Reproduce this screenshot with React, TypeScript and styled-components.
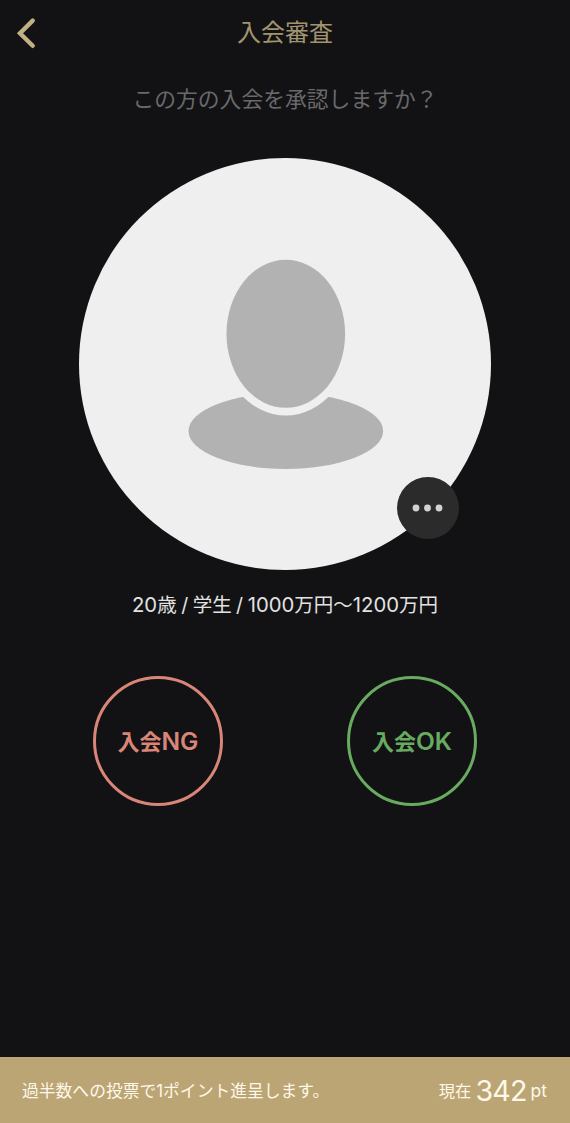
import React from "react";
import styled, { createGlobalStyle } from "styled-components";

const GlobalStyle = createGlobalStyle`
  * { box-sizing: border-box; }
  body { margin: 0; background: #121214; }
`;

const Screen = styled.main`
  width: 570px;
  height: 1123px;
  display: flex;
  flex-direction: column;
  overflow: hidden;
  background: #121214;
  font-family: Inter, "Noto Sans CJK JP", sans-serif;
  white-space: nowrap;
`;

const Header = styled.header`
  display: grid;
  grid-template-columns: 52px 1fr 52px;
  align-items: center;
  height: 66px;
`;

const BackButton = styled.button`
  display: flex;
  padding: 0 0 0 16px;
  border: 0;
  background: none;
`;

const Title = styled.h1`
  margin: 0;
  color: #a1956f;
  font-size: 24px;
  font-weight: 400;
  line-height: 36px;
  text-align: center;
`;

const Question = styled.p`
  margin: 17px 0 0;
  color: #69696b;
  font-size: 21.8px;
  font-weight: 400;
  line-height: 32px;
  text-align: center;
`;

const Avatar = styled.div`
  position: relative;
  flex: none;
  width: 412px;
  height: 412px;
  margin: 42.5px auto 0;
  border-radius: 50%;
  background: #efefef;
`;

const MoreButton = styled.button`
  position: absolute;
  left: 318px;
  top: 319px;
  display: flex;
  align-items: center;
  justify-content: center;
  width: 62px;
  height: 62px;
  padding: 1px 0 0;
  border: 0;
  border-radius: 50%;
  background: #2b2b2b;
`;

const Profile = styled.p`
  margin: 20.5px 0 0;
  color: #e2e2e2;
  font-size: 19.5px;
  font-weight: 400;
  line-height: 31px;
  word-spacing: -1px;
  text-align: center;
`;

const Latin = styled.span<{ $size: number }>`
  font-size: ${(p) => p.$size}px;
  line-height: 1;
`;

const Votes = styled.div`
  display: flex;
  justify-content: center;
  gap: 124px;
  margin-top: 55px;
`;

const VoteButton = styled.button<{ $color: string }>`
  width: 130px;
  height: 130px;
  padding: 2px 0 0;
  border: 3px solid ${(p) => p.$color};
  border-radius: 50%;
  background: none;
  color: ${(p) => p.$color};
  font: 600 22px/34px Inter, "Noto Sans CJK JP", sans-serif;
`;

const Footer = styled.footer`
  display: flex;
  align-items: center;
  justify-content: space-between;
  height: 66px;
  margin-top: auto;
  padding: 2px 23px 0 22px;
  background: #bba574;
  color: #fff8ea;
`;

const Notice = styled.span`
  font-size: 16.8px;
  line-height: 26px;
`;

const Points = styled.span`
  display: flex;
  align-items: center;
  font-size: 16.3px;
  line-height: 36px;
`;

const PointValue = styled.span`
  margin: 0 4px;
  font-size: 28.6px;
  letter-spacing: -0.8px;
`;

export default function App() {
  return (
    <Screen>
      <GlobalStyle />
      <Header>
        <BackButton aria-label="戻る">
          <svg width="20" height="32" viewBox="0 0 20 32" fill="none">
            <path d="M16.7 3.6 4 16.2 16.7 28.8" stroke="#c1b083" strokeWidth="4.4" strokeLinecap="round" />
          </svg>
        </BackButton>
        <Title>入会審査</Title>
      </Header>
      <Question>この方の入会を承認しますか？</Question>
      <Avatar>
        <svg width="412" height="412" viewBox="0 0 412 412">
          <ellipse cx="206.8" cy="273" rx="97.3" ry="38" fill="#b2b2b2" />
          <ellipse cx="206.8" cy="176" rx="67" ry="81.5" fill="#efefef" />
          <ellipse cx="206.8" cy="175.8" rx="59.3" ry="74" fill="#b2b2b2" />
        </svg>
        <MoreButton aria-label="その他">
          <svg width="32" height="8" viewBox="0 0 32 8" fill="#d2d2d2">
            <circle cx="4" cy="4" r="3.4" />
            <circle cx="15.5" cy="4" r="3.4" />
            <circle cx="27" cy="4" r="3.4" />
          </svg>
        </MoreButton>
      </Avatar>
      <Profile>
        <Latin $size={20.3}>20</Latin>歳 / 学生 / <Latin $size={20.3}>1000</Latin>万円〜
        <Latin $size={20.3}>1200</Latin>万円
      </Profile>
      <Votes>
        <VoteButton $color="#d98578">
          入会<Latin $size={24.5}>NG</Latin>
        </VoteButton>
        <VoteButton $color="#68ab60">
          入会<Latin $size={24.5}>OK</Latin>
        </VoteButton>
      </Votes>
      <Footer>
        <Notice>過半数への投票で1ポイント進呈します。</Notice>
        <Points>
          現在<PointValue>342</PointValue>
          <Latin $size={17.5}>pt</Latin>
        </Points>
      </Footer>
    </Screen>
  );
}
